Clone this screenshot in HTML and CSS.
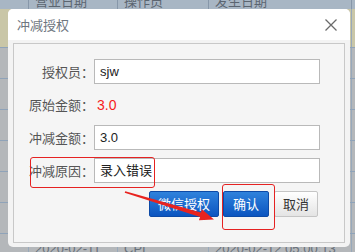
FILE: index.html
```html
<!DOCTYPE html>
<html lang="zh-CN">
<head>
  <meta charset="UTF-8">
  <title>冲减授权</title>
  <link rel="stylesheet" href="styles.css">
</head>
<body>
  <div class="table">
    <div class="row head"><span></span><span>营业日期</span><span>操作员</span><span>发生日期</span><span></span></div>
    <div class="row picked"><span></span><span></span><span></span><span></span><span></span></div>
    <div class="row"><span></span><span></span><span></span><span></span><span></span></div>
    <div class="row"><span></span><span></span><span></span><span></span><span></span></div>
    <div class="row"><span></span><span></span><span></span><span></span><span></span></div>
    <div class="row"><span></span><span></span><span></span><span></span><span></span></div>
    <div class="row"><span></span><span></span><span></span><span></span><span></span></div>
    <div class="row"><span></span><span></span><span></span><span></span><span></span></div>
    <div class="row"><span></span><span>2020-02-11</span><span>CPI</span><span>2020-02-12 05:00:13</span><span></span></div>
  </div>

  <div class="dialog">
    <div class="dialog-title">
      <span>冲减授权</span>
      <svg class="close" width="12" height="12" viewBox="0 0 12 12">
        <path d="M0.5 0.5 L11.5 11.5 M11.5 0.5 L0.5 11.5" stroke="#6a6a6a" stroke-width="1.3" fill="none"/>
      </svg>
    </div>
    <div class="dialog-body">
      <div class="panel">
        <div class="field">
          <label>授权员：</label>
          <div class="input">sjw</div>
        </div>
        <div class="field">
          <label>原始金额：</label>
          <div class="value">3.0</div>
        </div>
        <div class="field">
          <label>冲减金额：</label>
          <div class="input">3.0</div>
        </div>
        <div class="field">
          <label>冲减原因：</label>
          <div class="input">录入错误</div>
        </div>
        <div class="actions">
          <button class="btn blue wide">微信授权</button>
          <button class="btn blue">确认</button>
          <button class="btn grey">取消</button>
        </div>
      </div>
    </div>
    <div class="mark mark-reason"></div>
    <div class="mark mark-ok"></div>
  </div>

  <svg class="arrow" width="355" height="252" viewBox="0 0 355 252">
    <polygon points="125.3,191.2 200.9,212.6 201.9,209.3 214,219.5 198.9,220.3 200.1,217.0 124.7,192.8" fill="#e8231f"/>
  </svg>
</body>
</html>
```

FILE: styles.css
```css
body {
  margin: 0;
  width: 355px;
  height: 252px;
  overflow: hidden;
  position: relative;
  background: #b4b7ba;
  font-family: "Liberation Sans", "Noto Sans CJK SC", sans-serif;
}
.table {
  margin-top: -12px;
  height: 264px;
  overflow: hidden;
}
.row {
  display: grid;
  grid-template-columns: 29px 89px 91px 143px 3px;
  height: 31px;
  box-sizing: border-box;
  border-bottom: 1px solid #8fa3b9;
  color: #687079;
  font-size: 13px;
}
.row span {
  border-right: 1px solid #98a9bb;
  padding: 0 6px;
  line-height: 30px;
  white-space: nowrap;
}
.row.head {
  height: 21px;
  background: #a8b6c4;
  padding-top: 6px;
  border-bottom: none;
  color: #5b6570;
}
.row.head span {
  line-height: 15px;
  border-right-color: #8797a9;
}
.row.picked {
  height: 39px;
  background: #c9c6a7;
}

.dialog {
  position: absolute;
  left: 8px;
  top: 9px;
  width: 342px;
  height: 238px;
  background: #f3f3f3;
  border-radius: 5px;
  overflow: hidden;
  font-family: "Noto Sans CJK SC", sans-serif;
}
.dialog-title {
  height: 31px;
  background: #fff;
  display: flex;
  align-items: center;
  justify-content: space-between;
  padding: 0 13px 0 9px;
  font-size: 13px;
  color: #6e7680;
}
.close {
  display: block;
}
.dialog-body {
  padding: 3px 5px 4px 5px;
}
.panel {
  height: 200px;
  box-sizing: border-box;
  border: 1px solid #c8c8c8;
  background: #f5f5f5;
  padding-top: 15px;
}
.field {
  display: flex;
  align-items: center;
  height: 25px;
  margin-bottom: 8px;
}
.field label {
  width: 80px;
  text-align: right;
  font-size: 13px;
  color: #555;
}
.input {
  width: 226px;
  height: 25px;
  box-sizing: border-box;
  border: 1px solid #b9b9b9;
  background: #fff;
  padding: 0 5px;
  line-height: 23px;
  font-size: 13px;
  color: #222;
  font-family: "Liberation Sans", "Noto Sans CJK SC", sans-serif;
}
.value {
  padding-left: 3px;
  font-size: 14px;
  color: #f51c1c;
  font-family: "Liberation Sans", sans-serif;
}
.actions {
  display: flex;
  gap: 4px;
  padding-left: 135px;
  margin-top: 2px;
}
.btn {
  height: 26px;
  padding: 0;
  border-radius: 2px;
  font-family: "Noto Sans CJK SC", sans-serif;
  font-size: 13px;
  line-height: 24px;
}
.btn.blue {
  width: 46px;
  border: 1px solid #0d4aa6;
  background: linear-gradient(#2f82dc, #0b55c0);
  color: #fff;
}
.btn.blue.wide {
  width: 70px;
}
.btn.grey {
  width: 44px;
  margin-left: 1px;
  border: 1px solid #c5c5c5;
  background: linear-gradient(#ffffff, #e4e4e4);
  color: #333;
}
.mark {
  position: absolute;
  border: 1px solid #e52222;
  border-radius: 3px;
  box-sizing: border-box;
}
.mark-reason {
  left: 22px;
  top: 148px;
  width: 125px;
  height: 31px;
}
.mark-ok {
  left: 214px;
  top: 175px;
  width: 53px;
  height: 46px;
}
.arrow {
  position: absolute;
  left: 0;
  top: 0;
}
```
